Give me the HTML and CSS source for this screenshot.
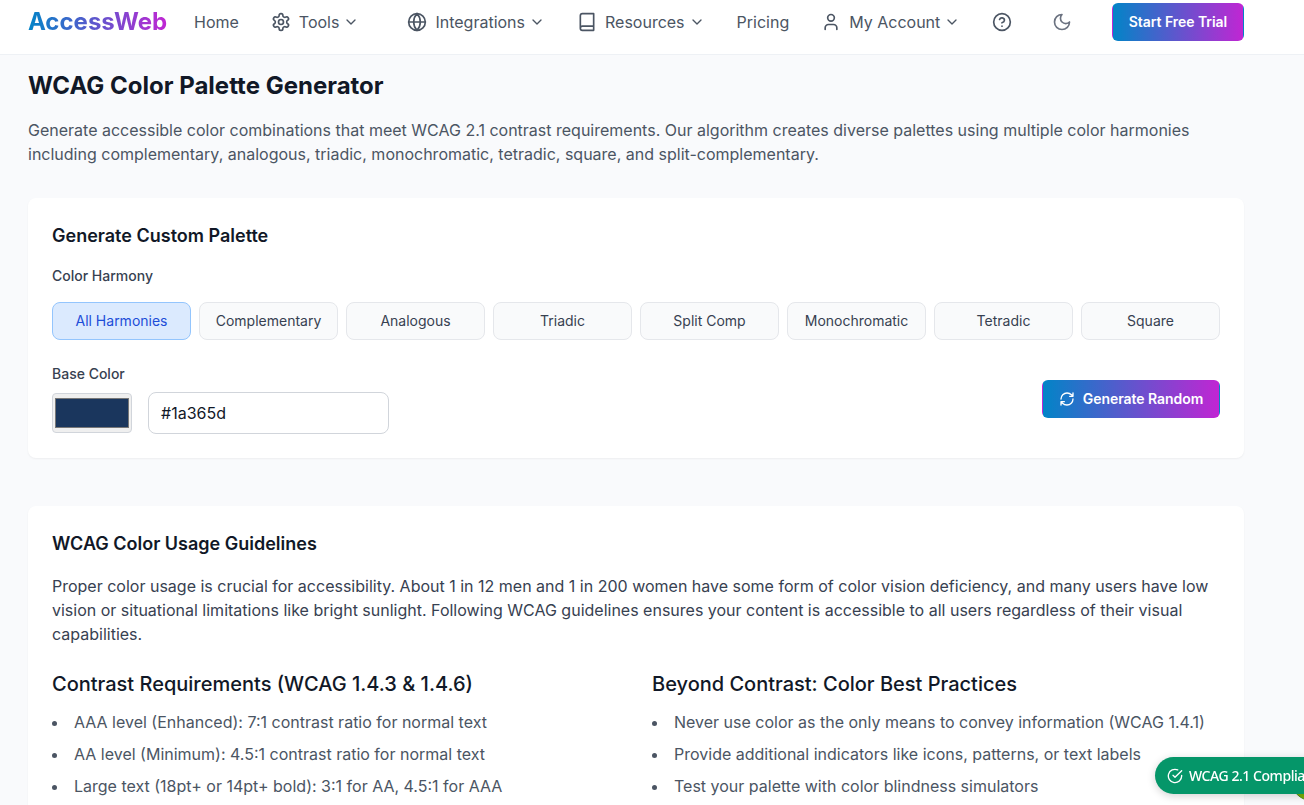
FILE: index.html
```html
<!DOCTYPE html>
<html lang="en">
<head>
<meta charset="utf-8">
<title>WCAG Color Palette Generator</title>
<link rel="stylesheet" href="styles.css">
</head>
<body>
<svg class="sprite" aria-hidden="true">
  <symbol id="chevron" viewBox="0 0 24 24"><path d="m6 9 6 6 6-6"/></symbol>
</svg>
<header class="topbar">
  <a class="logo">AccessWeb</a>
  <nav class="nav">
    <a class="nav-item">Home</a>
    <a class="nav-item nav-tools"><svg class="icon" viewBox="0 0 24 24"><path d="M12.22 2h-.44a2 2 0 0 0-2 2v.18a2 2 0 0 1-1 1.73l-.43.25a2 2 0 0 1-2 0l-.15-.08a2 2 0 0 0-2.73.73l-.22.38a2 2 0 0 0 .73 2.73l.15.1a2 2 0 0 1 1 1.72v.51a2 2 0 0 1-1 1.74l-.15.09a2 2 0 0 0-.73 2.73l.22.38a2 2 0 0 0 2.73.73l.15-.08a2 2 0 0 1 2 0l.43.25a2 2 0 0 1 1 1.73V20a2 2 0 0 0 2 2h.44a2 2 0 0 0 2-2v-.18a2 2 0 0 1 1-1.73l.43-.25a2 2 0 0 1 2 0l.15.08a2 2 0 0 0 2.73-.73l.22-.39a2 2 0 0 0-.73-2.73l-.15-.08a2 2 0 0 1-1-1.74v-.5a2 2 0 0 1 1-1.74l.15-.09a2 2 0 0 0 .73-2.73l-.22-.38a2 2 0 0 0-2.73-.73l-.15.08a2 2 0 0 1-2 0l-.43-.25a2 2 0 0 1-1-1.73V4a2 2 0 0 0-2-2z"/><circle cx="12" cy="12" r="3"/></svg>Tools<svg class="chevron"><use href="#chevron"/></svg></a>
    <a class="nav-item"><svg class="icon" viewBox="0 0 24 24"><circle cx="12" cy="12" r="10"/><path d="M12 2a14.5 14.5 0 0 0 0 20 14.5 14.5 0 0 0 0-20M2 12h20"/></svg>Integrations<svg class="chevron"><use href="#chevron"/></svg></a>
    <a class="nav-item"><svg class="icon" viewBox="0 0 24 24"><path d="M4 19.5v-15A2.5 2.5 0 0 1 6.5 2H20v20H6.5a2.5 2.5 0 0 1 0-5H20"/></svg>Resources<svg class="chevron"><use href="#chevron"/></svg></a>
    <a class="nav-item">Pricing</a>
    <a class="nav-item"><svg class="icon" viewBox="0 0 24 24"><path d="M19 21v-2a4 4 0 0 0-4-4H9a4 4 0 0 0-4 4v2"/><circle cx="12" cy="7" r="4"/></svg>My Account<svg class="chevron"><use href="#chevron"/></svg></a>
    <a class="nav-item nav-help" aria-label="Help"><svg class="icon" viewBox="0 0 24 24"><circle cx="12" cy="12" r="10"/><path d="M9.09 9a3 3 0 0 1 5.83 1c0 2-3 3-3 3M12 17h.01"/></svg></a>
  </nav>
  <a class="theme" aria-label="Dark mode"><svg class="icon" viewBox="0 0 24 24"><path d="M12 3a6 6 0 0 0 9 9 9 9 0 1 1-9-9Z"/></svg></a>
  <a class="button button-trial">Start Free Trial</a>
</header>
<main class="page">
  <h1 class="title">WCAG Color Palette Generator</h1>
  <p class="intro">Generate accessible color combinations that meet WCAG 2.1 contrast requirements. Our algorithm creates diverse palettes using multiple color harmonies including complementary, analogous, triadic, monochromatic, tetradic, square, and split-complementary.</p>
  <section class="card">
    <h2 class="card-title">Generate Custom Palette</h2>
    <div class="label harmony-label">Color Harmony</div>
    <div class="harmonies">
      <div class="harmony active">All Harmonies</div>
      <div class="harmony">Complementary</div>
      <div class="harmony">Analogous</div>
      <div class="harmony">Triadic</div>
      <div class="harmony">Split Comp</div>
      <div class="harmony">Monochromatic</div>
      <div class="harmony">Tetradic</div>
      <div class="harmony">Square</div>
    </div>
    <div class="base-row">
      <div>
        <div class="label">Base Color</div>
        <div class="inputs">
          <div class="swatch"><div class="swatch-color"></div></div>
          <div class="hex">#1a365d</div>
        </div>
      </div>
      <a class="button button-random"><svg class="button-icon" viewBox="0 0 24 24"><path d="M3 12a9 9 0 0 1 9-9 9.75 9.75 0 0 1 6.74 2.74L21 8M21 3v5h-5M21 12a9 9 0 0 1-9 9 9.75 9.75 0 0 1-6.74-2.74L3 16M8 16H3v5"/></svg>Generate Random</a>
    </div>
  </section>
  <section class="card">
    <h2 class="card-title">WCAG Color Usage Guidelines</h2>
    <p class="guide">Proper color usage is crucial for accessibility. About 1 in 12 men and 1 in 200 women have some form of color vision deficiency, and many users have low vision or situational limitations like bright sunlight. Following WCAG guidelines ensures your content is accessible to all users regardless of their visual capabilities.</p>
    <div class="columns">
      <div>
        <h3 class="subtitle">Contrast Requirements (WCAG 1.4.3 &amp; 1.4.6)</h3>
        <ul class="list">
          <li>AAA level (Enhanced): 7:1 contrast ratio for normal text</li>
          <li>AA level (Minimum): 4.5:1 contrast ratio for normal text</li>
          <li>Large text (18pt+ or 14pt+ bold): 3:1 for AA, 4.5:1 for AAA</li>
        </ul>
      </div>
      <div>
        <h3 class="subtitle">Beyond Contrast: Color Best Practices</h3>
        <ul class="list">
          <li>Never use color as the only means to convey information (WCAG 1.4.1)</li>
          <li>Provide additional indicators like icons, patterns, or text labels</li>
          <li>Test your palette with color blindness simulators</li>
        </ul>
      </div>
    </div>
  </section>
</main>
<div class="orb"></div>
<div class="badge"><svg class="badge-icon" viewBox="0 0 24 24"><path d="M22 11.08V12a10 10 0 1 1-5.93-9.14"/><path d="m9 11 3 3L22 4"/></svg>WCAG 2.1 Compliant</div>
</body>
</html>
```
FILE: styles.css
```css
* { box-sizing: border-box; margin: 0; padding: 0; }
html { overflow: hidden; }
body {
  height: 805px;
  overflow: hidden;
  background: #f9fafc;
  color: #111827;
  font: 16px/24px Inter, sans-serif;
}
svg { fill: none; stroke: currentColor; stroke-width: 2; stroke-linecap: round; stroke-linejoin: round; flex: none; }
.sprite { display: none; }
.topbar {
  display: flex;
  align-items: center;
  height: 55px;
  padding: 0 60px 11px 28px;
  background: #fff;
  border-bottom: 1px solid #eef1f5;
}
.logo {
  width: 139px;
  margin-right: 27px;
  font-size: 24px;
  font-weight: 700;
  line-height: 32px;
  white-space: nowrap;
  color: transparent;
  background: linear-gradient(90deg, #0284c7, #c026d3);
  -webkit-background-clip: text;
  background-clip: text;
}
.nav { display: flex; align-items: center; gap: 32px; color: #4b5563; }
.nav-item { display: flex; align-items: center; gap: 8px; white-space: nowrap; }
.nav-tools { margin-right: 16px; }
.icon { width: 20px; height: 20px; }
.chevron { width: 16px; height: 16px; margin-left: -4px; }
.theme { display: flex; margin-left: auto; color: #6b7280; }
.button {
  display: flex;
  align-items: center;
  justify-content: center;
  height: 38px;
  padding: 0 16px;
  border: 1px solid transparent;
  border-radius: 6px;
  background: linear-gradient(90deg, #0284c7, #c026d3);
  color: #fff;
  font-size: 14px;
  font-weight: 600;
  line-height: 20px;
  letter-spacing: -0.05px;
  white-space: nowrap;
}
.button-trial { width: 132px; margin-left: 40px; }
.button-random { width: 178px; }
.button-icon { width: 16px; height: 16px; margin-right: 8px; }
.page { padding: 15px 60px 0 28px; }
.title { font-size: 24px; font-weight: 700; line-height: 32px; margin-bottom: 16px; }
.intro { color: #4b5563; margin-bottom: 32px; }
.card {
  padding: 24px;
  margin-bottom: 48px;
  border-radius: 8px;
  background: #fff;
  box-shadow: 0 1px 2px rgba(0, 0, 0, .05);
}
.card-title { font-size: 18px; font-weight: 600; line-height: 28px; margin-bottom: 16px; }
.label { font-size: 14px; font-weight: 500; line-height: 20px; color: #374151; margin-bottom: 8px; }
.harmony-label { margin-bottom: 16px; }
.harmonies { display: grid; grid-template-columns: repeat(8, 1fr); gap: 8px; margin-bottom: 24px; }
.harmony {
  padding: 8px 0;
  border: 1px solid #e5e7eb;
  border-radius: 8px;
  background: #f9fafb;
  color: #374151;
  font-size: 14px;
  line-height: 20px;
  text-align: center;
}
.active { background: #dbeafe; border-color: #93c5fd; color: #1d4ed8; }
.base-row { display: flex; align-items: center; justify-content: space-between; }
.inputs { display: flex; align-items: center; gap: 16px; }
.swatch { width: 80px; height: 40px; padding: 4px 2px; border: 1px solid #d1d5db; border-radius: 4px; background: #efefef; }
.swatch-color { height: 30px; border: 1px solid #777; background: #1a365d; }
.hex { width: 241px; height: 42px; padding: 8px 12px; border: 1px solid #d1d5db; border-radius: 8px; }
.guide { color: #374151; margin-bottom: 24px; }
.columns { display: grid; grid-template-columns: 1fr 1fr; gap: 32px; }
.subtitle { font-size: 20px; font-weight: 500; line-height: 28px; margin-bottom: 12px; }
.list { display: grid; gap: 8px; list-style: disc inside; color: #4b5563; white-space: nowrap; }
.badge {
  position: fixed;
  left: 1155px;
  top: 757px;
  display: flex;
  align-items: center;
  gap: 6px;
  height: 37px;
  padding: 0 16px 0 12px;
  border-radius: 19px;
  background: #059669;
  color: #fff;
  font: 500 14px/20px "Noto Sans", "Open Sans", sans-serif;
  letter-spacing: -0.45px;
  white-space: nowrap;
  box-shadow: 0 2px 8px rgba(0, 0, 0, .18);
}
.badge-icon { width: 16px; height: 16px; }
.orb { position: fixed; left: 1291px; top: 760px; width: 41px; height: 41px; border-radius: 50%; background: #7cb305; border: 1px solid #4d8a1f; }
```
